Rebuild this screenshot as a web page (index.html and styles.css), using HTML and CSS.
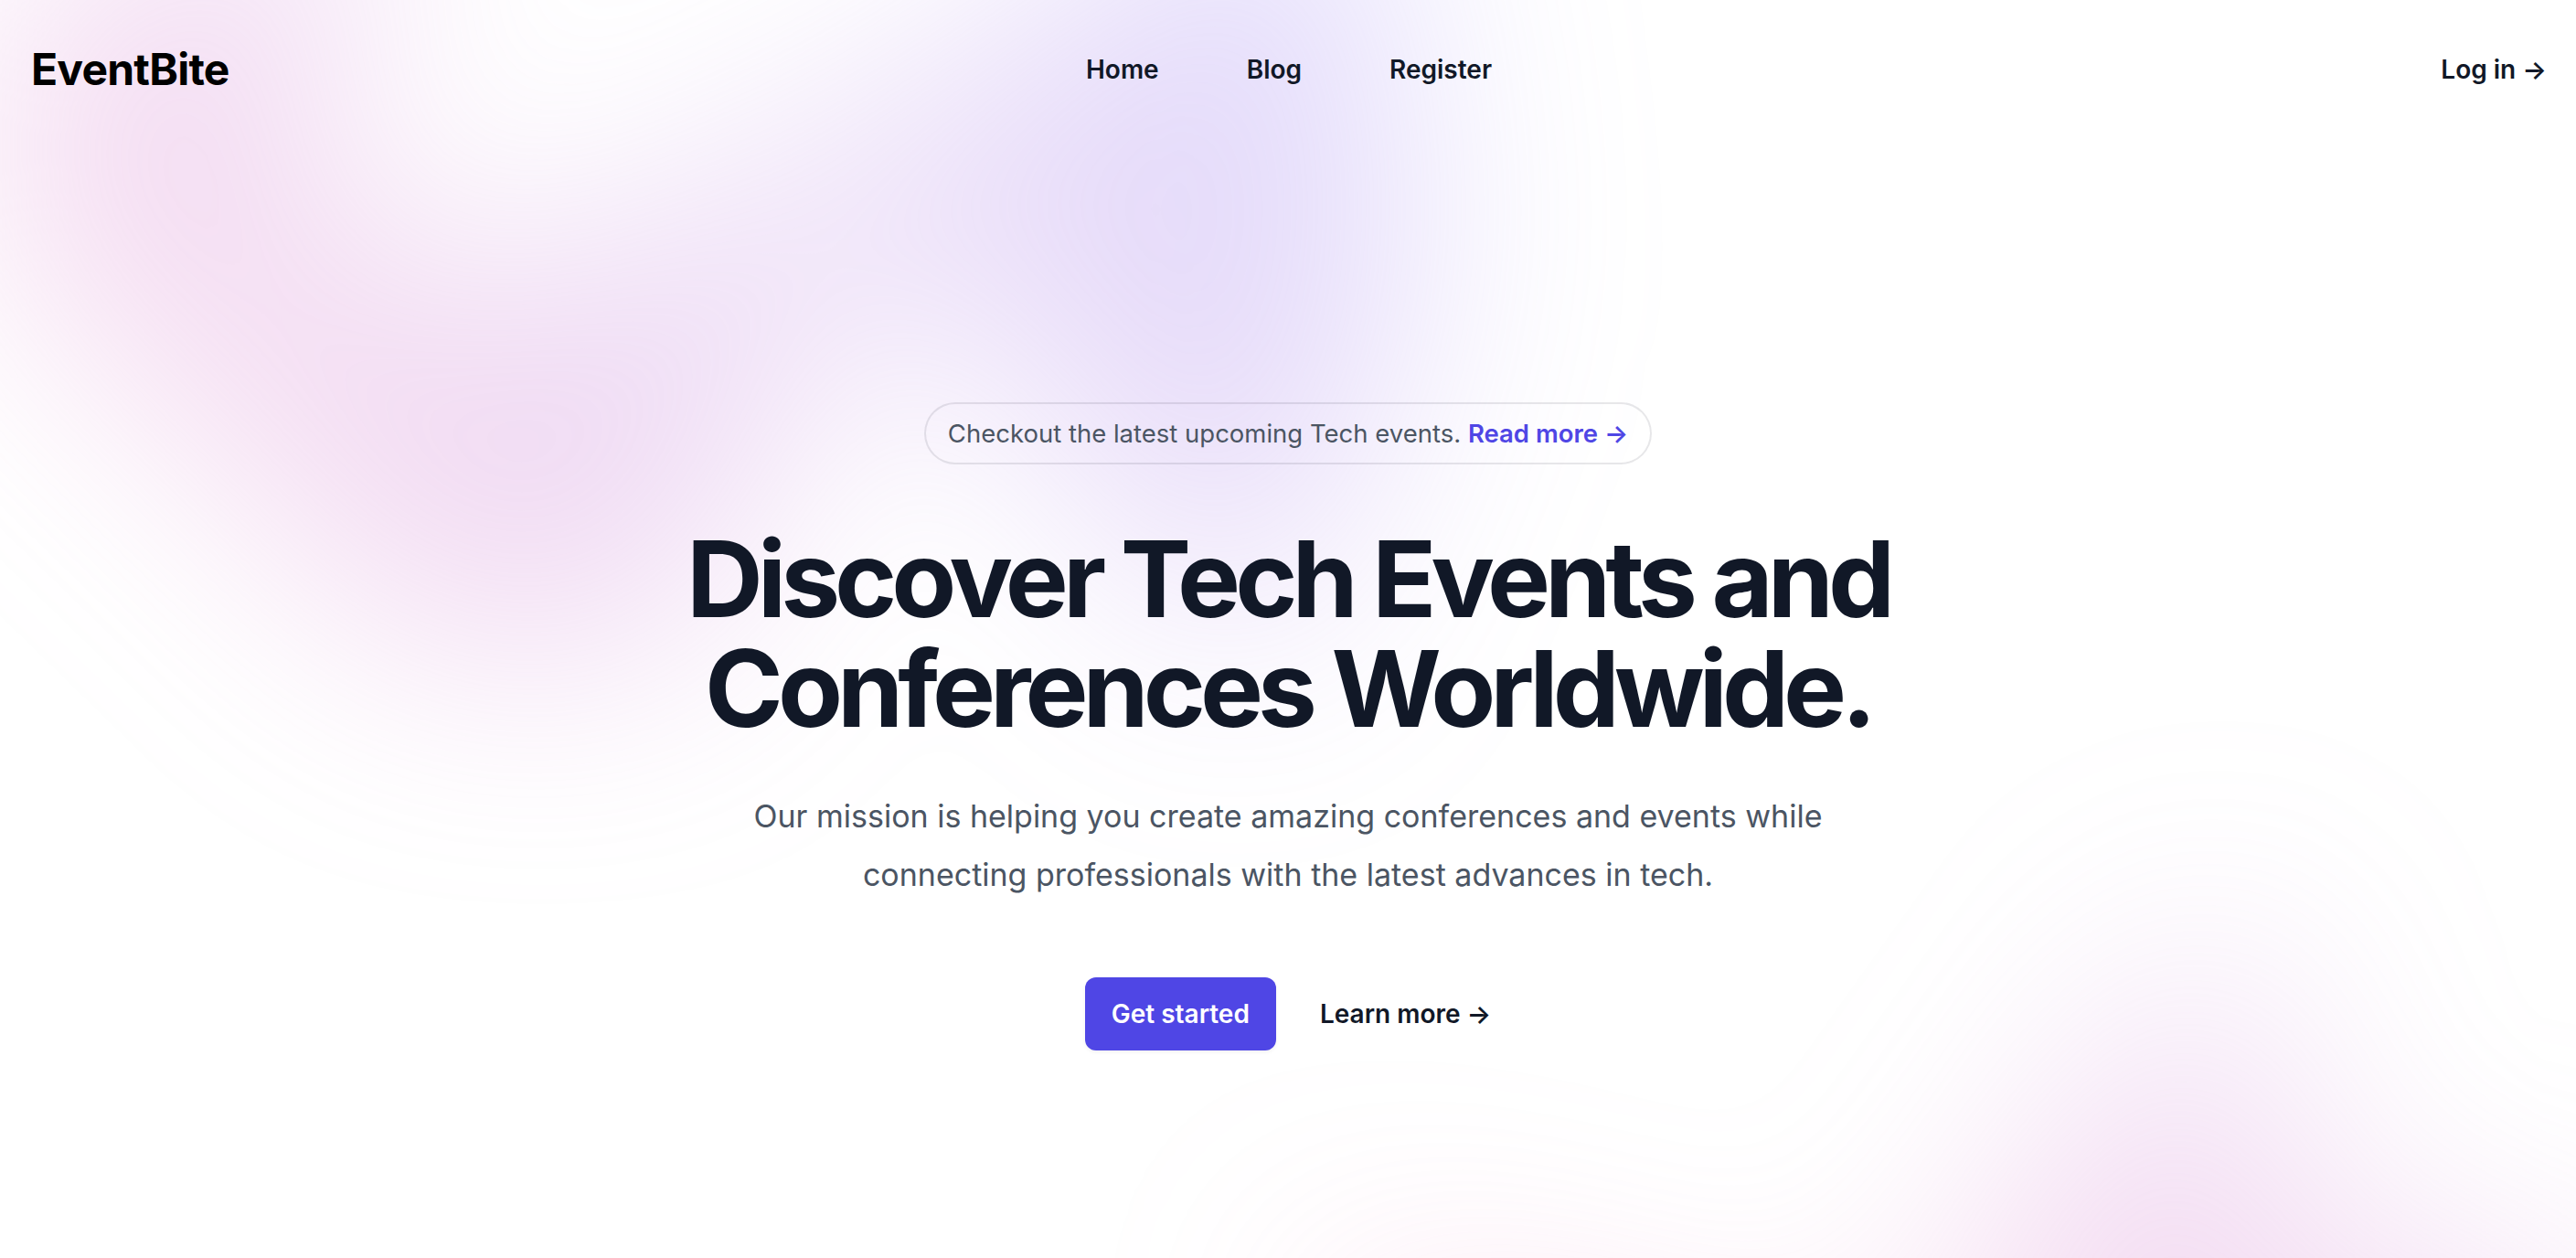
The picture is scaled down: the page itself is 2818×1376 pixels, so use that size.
FILE: index.html
```html
<!DOCTYPE html>
<html lang="en">
<head>
<meta charset="utf-8">
<title>EventBite</title>
<link rel="stylesheet" href="styles.css">
</head>
<body>
<div class="page">
  <div class="blob-wrap blob-top" aria-hidden="true"><div class="blob blob-top-shape"></div></div>
  <header class="header">
    <nav class="nav">
      <div class="nav-side"><a class="logo" href="#">EventBite</a></div>
      <div class="nav-links">
        <a class="nav-link" href="#">Home</a>
        <a class="nav-link" href="#">Blog</a>
        <a class="nav-link" href="#">Register</a>
      </div>
      <div class="nav-side nav-right"><a class="nav-link" href="#">Log in <span aria-hidden="true">→</span></a></div>
    </nav>
  </header>
  <main class="hero">
    <div class="hero-inner">
      <div class="pill-row">
        <div class="pill">Checkout the latest upcoming Tech events. <a class="pill-link" href="#">Read more <span aria-hidden="true">→</span></a></div>
      </div>
      <div class="center">
        <h1 class="title">Discover Tech Events and Conferences Worldwide.</h1>
        <p class="lead">Our mission is helping you create amazing conferences and events while connecting professionals with the latest advances in tech.</p>
        <div class="actions">
          <a class="btn-primary" href="#">Get started</a>
          <a class="btn-link" href="#">Learn more <span aria-hidden="true">→</span></a>
        </div>
      </div>
    </div>
  </main>
  <div class="blob-wrap blob-bottom" aria-hidden="true"><div class="blob blob-bottom-shape"></div></div>
</div>
</body>
</html>
```

FILE: styles.css
```css
* { box-sizing: border-box; }
html, body { margin: 0; padding: 0; }
body {
  font-family: Inter, "Liberation Sans", sans-serif;
  background: #ffffff;
  color: #111827;
  overflow: hidden;
}
a { text-decoration: none; color: inherit; }

.page {
  position: relative;
  isolation: isolate;
  height: 1376px;
  overflow: hidden;
}

.blob-wrap {
  position: absolute;
  left: 0;
  right: 0;
  z-index: -10;
  overflow: hidden;
  filter: blur(128px);
}
.blob-top { top: -640px; }
.blob-bottom { top: 514px; }

.blob {
  position: relative;
  width: 2310px;
  aspect-ratio: 1155 / 678;
  background: linear-gradient(to top right, #ff80b5, #9089fc);
  opacity: 0.3;
  clip-path: polygon(74.1% 44.1%, 100% 61.6%, 97.5% 26.9%, 85.5% 0.1%, 80.7% 2%, 72.5% 32.5%, 60.2% 62.4%, 52.4% 68.1%, 47.5% 58.3%, 45.2% 34.5%, 27.5% 76.7%, 0.1% 64.9%, 17.9% 100%, 27.6% 76.8%, 76.1% 97.7%, 74.1% 44.1%);
}
.blob-top-shape {
  left: calc(50% - 960px);
  transform: translateX(-50%) rotate(30deg);
}
.blob-bottom-shape {
  left: calc(50% + 1152px);
  transform: translateX(-50%);
}

.nav {
  display: flex;
  align-items: center;
  justify-content: space-between;
  padding: 44px 32px 42px 34px;
}
.nav-side { flex: 1; display: flex; }
.nav-right { justify-content: flex-end; }
.logo {
  font-size: 48px;
  line-height: 64px;
  font-weight: 700;
  color: #000;
  letter-spacing: -0.8px;
}
.nav-links {
  display: flex;
  gap: 96px;
}
.nav-link {
  font-size: 28px;
  line-height: 48px;
  font-weight: 600;
  color: #111827;
}

.hero { padding: 292px 48px 200px; }
.hero-inner {
  max-width: 1344px;
  margin: 0 auto;
}
.pill-row {
  display: flex;
  justify-content: center;
  margin-bottom: 67px;
}
.pill {
  border-radius: 9999px;
  padding: 8px 24px;
  font-size: 27.5px;
  line-height: 48px;
  color: #4b5563;
  box-shadow: 0 0 0 2px rgba(17, 24, 39, 0.1);
}
.pill-link {
  font-weight: 600;
  color: #4f46e5;
}
.center { text-align: center; }
.title {
  margin: 0;
  font-size: 116px;
  line-height: 120px;
  font-weight: 700;
  letter-spacing: -6px;
  color: #111827;
}
.lead {
  margin: 48px 0 0;
  font-size: 34px;
  line-height: 64px;
  color: #4b5563;
}
.actions {
  margin-top: 80px;
  display: flex;
  align-items: center;
  justify-content: center;
  gap: 48px;
}
.btn-primary {
  background: #4f46e5;
  color: #fff;
  border-radius: 12px;
  padding: 20px 29px;
  font-size: 28px;
  line-height: 40px;
  font-weight: 600;
  box-shadow: 0 2px 4px rgba(0, 0, 0, 0.05);
}
.btn-link {
  font-size: 28px;
  line-height: 48px;
  font-weight: 600;
  color: #111827;
}
```
